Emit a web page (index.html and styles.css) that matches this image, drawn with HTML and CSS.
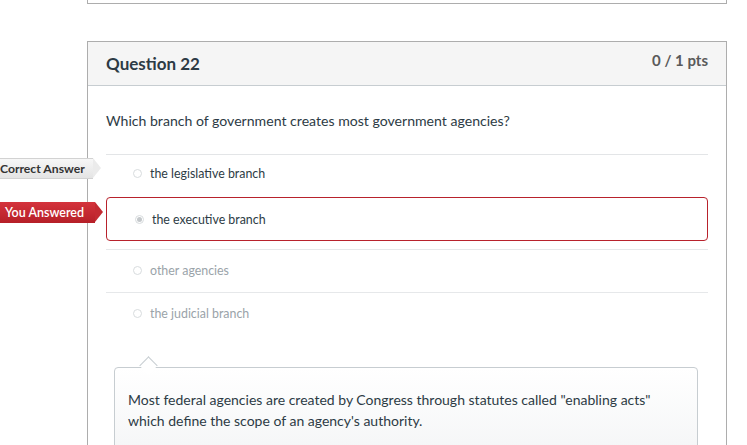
FILE: index.html
```html
<!DOCTYPE html>
<html>
<head>
<meta charset="utf-8">
<link rel="stylesheet" href="styles.css">
</head>
<body>
<div class="page">
  <div class="prev-card"></div>
  <div class="question">
    <div class="q-header">
      <h2 class="q-title">Question 22</h2>
      <span class="q-pts">0 / 1 pts</span>
    </div>
    <div class="q-body">
      <p class="q-text">Which branch of government creates most government agencies?</p>
      <div class="answers">
        <div class="answer correct">
          <span class="tag tag-correct">Correct Answer</span>
          <span class="radio"></span>
          <span class="a-text">the legislative branch</span>
        </div>
        <div class="answer selected">
          <span class="tag tag-wrong">You Answered</span>
          <span class="radio checked"></span>
          <span class="a-text">the executive branch</span>
        </div>
        <div class="answer faded">
          <span class="radio"></span>
          <span class="a-text">other agencies</span>
        </div>
        <div class="answer faded">
          <span class="radio"></span>
          <span class="a-text">the judicial branch</span>
        </div>
      </div>
      <div class="comment">
        <p>Most federal agencies are created by Congress through statutes called "enabling acts" which define the scope of an agency's authority.</p>
      </div>
    </div>
  </div>
</div>
</body>
</html>
```
FILE: styles.css
```css
html, body {
  margin: 0;
  padding: 0;
  background: #ffffff;
  font-family: Lato, "Open Sans", "Liberation Sans", sans-serif;
  color: #2d3b45;
  overflow: hidden;
}

.page {
  padding-left: 87px;
  width: 640px;
}

.prev-card {
  height: 3px;
  border: 1px solid #adadad;
  border-top: none;
}

.question {
  margin-top: 37px;
  border: 1px solid #adadad;
  border-bottom: none;
  height: 420px;
}

.q-header {
  display: flex;
  justify-content: space-between;
  align-items: flex-start;
  background: #f5f5f5;
  border-bottom: 1px solid #c7cdd1;
  height: 43px;
  padding: 0 18px;
}

.q-title {
  margin: 0;
  padding-top: 11px;
  font-size: 17px;
  font-weight: 700;
  color: #2d3b45;
  line-height: 22px;
}

.q-pts {
  padding-top: 8px;
  font-size: 15px;
  font-weight: 700;
  color: #5a5a5a;
  line-height: 20px;
}

.q-body {
  padding: 0 18px;
}

.q-text {
  margin: 0;
  padding: 24px 0 23px;
  font-size: 14.1px;
  line-height: 21px;
  border-bottom: 1px solid #e3e5e7;
}

.answer {
  position: relative;
  display: flex;
  align-items: center;
  height: 36px;
  padding-bottom: 6px;
  padding-left: 26px;
  font-size: 12.4px;
  color: #2d3b45;
}

.answer.selected {
  height: 42px;
  padding-bottom: 0;
  border: 1px solid #b8222c;
  border-radius: 4px;
  padding-left: 27px;
  margin-bottom: 8px;
}

.answer.faded {
  color: #9aa3a9;
  border-top: 1px solid #e6e8ea;
  height: 40px;
  padding-bottom: 2px;
}

.radio {
  width: 9px;
  height: 9px;
  border-radius: 50%;
  border: 1px solid #d8dcde;
  background: #fff;
  margin-right: 8px;
  margin-left: 1px;
  position: relative;
  box-sizing: border-box;
}

.radio.checked::after {
  content: "";
  position: absolute;
  left: 1px;
  top: 1px;
  width: 5px;
  height: 5px;
  border-radius: 50%;
  background: #c4c8cb;
}

.tag {
  position: absolute;
  left: -106px;
  height: 21px;
  line-height: 21px;
  font-size: 12.5px;
  font-weight: 700;
  box-sizing: border-box;
}

.tag::after {
  content: "";
  position: absolute;
  top: 0;
  border-top: 10.5px solid transparent;
  border-bottom: 10.5px solid transparent;
  border-left: 8px solid;
}

.tag-correct {
  top: 3px;
  background: linear-gradient(#f7f7f7, #e4e4e4);
  color: #333;
  border-top: 1px solid #d2d2d2;
  border-bottom: 1px solid #d2d2d2;
  line-height: 19px;
  width: 93px;
  padding-left: 0;
  font-size: 12.2px;
}

.tag-correct::after {
  top: -1px;
  right: -8px;
  border-left-color: #ebebeb;
}

.tag-wrong {
  left: -107px;
  top: 4px;
  background: linear-gradient(#d4333c, #b61f28);
  color: #fff;
  padding-left: 5px;
  font-weight: 600;
  width: 95px;
}

.tag-wrong::after {
  right: -8px;
  border-left-color: #c32a32;
}

.comment {
  position: relative;
  margin: 32px 10px 0 8px;
  border: 1px solid #c7cdd1;
  border-radius: 4px;
  background: linear-gradient(#ffffff, #f5f6f7);
  padding: 21px 13px 20px;
}

.comment::before {
  content: "";
  position: absolute;
  left: 27px;
  top: -9px;
  width: 12px;
  height: 12px;
  background: #fff;
  border-left: 1px solid #c7cdd1;
  border-top: 1px solid #c7cdd1;
  transform: rotate(45deg);
}

.comment p {
  margin: 0;
  font-size: 14px;
  line-height: 21px;
  color: #2d3b45;
}
```
